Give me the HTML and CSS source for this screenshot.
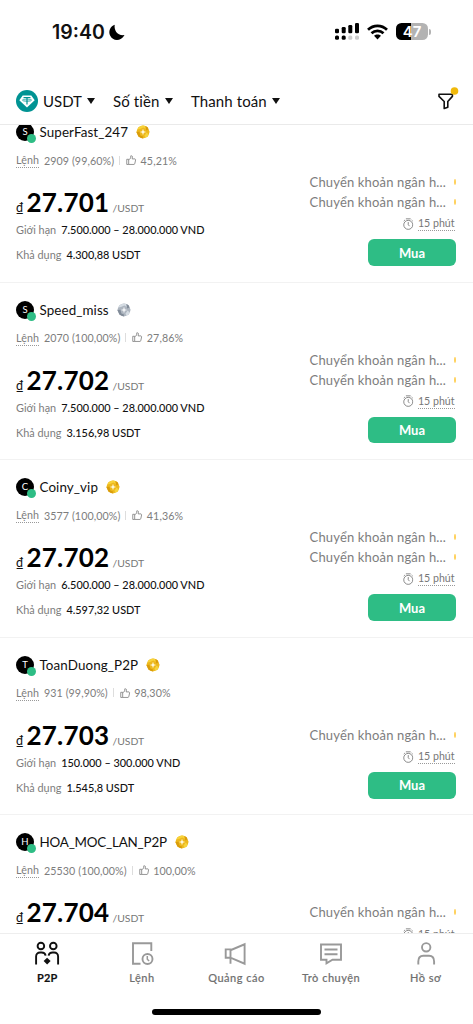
FILE: index.html
```html
<!DOCTYPE html>
<html lang="vi">
<head>
<meta charset="utf-8">
<meta name="viewport" content="width=device-width, initial-scale=1">
<title>P2P</title>
<link rel="stylesheet" href="styles.css">
</head>
<body>
<svg class="defs" width="0" height="0" aria-hidden="true">
  <defs>
    <symbol id="thumb" viewBox="0 0 11 11"><path d="M.8 4.500h2v5.400h-2zM2.800 5 5 3.300V.9c1.300-.3 2 .4 1.800 1.600l-.3 1.600h3l.6.8-.9 4.300-.7.7H2.800" fill="none" stroke="currentColor" stroke-width=".85" stroke-linejoin="round"/></symbol>
    <symbol id="timer" viewBox="0 0 11 12"><g fill="none" stroke="currentColor" stroke-width=".9"><circle cx="5.500" cy="6.900" r="4.700"/><path d="M3 .6h5M5.500 4v2.800l1.400 1.500M9 1.800l1.200 1.200M2 1.800.8 3"/></g></symbol>
    <symbol id="gold" viewBox="0 0 14 14"><path d="M4.800.9 7 .4l2.400.6 2.200 1.200 1 2.200 1 2.400-.8 2.600-1.300 2.300-2.400 1L7 13.600l-2.400-.8-2.200-1.300-1-2.200L.4 7l.8-2.600 1.300-2.200z" fill="#edb81d"/><path d="M4.800.9 7 .4l2.400.6.4 3-2.400-1.500L3.900 4l-2.700.5 1.300-2.300z" fill="#f8d33a"/><path d="m9.400 1 2.200 1.200 1 2.200-2.400 1.100zM.4 7l3-.2 1 3.600 2.600 1-.2 2.100-2.200-.7-2.200-1.300-1-2.200z" fill="#d99c0b"/><path d="m10.600 7.500 2.200 1.900-1.300 2.300-2.400 1-.5-2.200z" fill="#f6d43c"/><path d="m7 3.800.8 2.400 2.400.8-2.400.8L7 10.200l-.8-2.400L3.800 7l2.400-.8z" fill="#fffbe5"/></symbol>
    <symbol id="silver" viewBox="0 0 14 14"><path d="M4.800.9 7 .4l2.400.6 2.200 1.200 1 2.200 1 2.400-.8 2.600-1.300 2.300-2.400 1L7 13.600l-2.400-.8-2.200-1.300-1-2.200L.4 7l.8-2.600 1.300-2.200z" fill="#adb5bf"/><path d="M4.800.9 7 .4 9.400 1l.4 3-2.400-1.500L3.900 4l-2.700.5 1.300-2.300z" fill="#d5dce3"/><path d="m9.400 1 2.200 1.200 1 2.200-2.400 1.100zM.4 7l3-.2 1 3.600 2.600 1-.2 2.100-2.200-.7-2.200-1.300-1-2.200z" fill="#818b98"/><path d="m10.600 7.500 2.200 1.900-1.300 2.300-2.400 1-.5-2.200z" fill="#d5dce3"/><path d="m7 3.800.8 2.400 2.400.8-2.400.8L7 10.200l-.8-2.400L3.800 7l2.400-.8z" fill="#f4f6f8"/></symbol>
  </defs>
</svg>
<div class="app">
  <div class="status">
    <span class="clock">19:40</span>
    <svg class="moon" width="16" height="17" viewBox="0 0 16 17"><path d="M5.700.7C4.900 6.200 8.300 12 15.500 11.100 12 17.700 3.800 17.500 1.100 11.600-.8 7.200 1.100 2.500 5.700.700z"/></svg>
    <svg class="signal" width="25" height="18" viewBox="0 0 25 18"><rect x="0" y="5.700" width="4" height="4.600" rx="1.300"/><rect x="6.700" y="4" width="4" height="6.300" rx="1.300"/><rect x="13.300" y="2" width="4" height="8.300" rx="1.300"/><rect x="20" y="0" width="4" height="10.300" rx="1.300"/><rect x="0" y="12.500" width="4" height="4.200" rx="1.500"/><rect x="6.700" y="12.500" width="4" height="4.200" rx="1.500"/><g fill="#ccc"><rect x="13.300" y="12.500" width="4" height="4.200" rx="1.500"/><rect x="20" y="12.500" width="4" height="4.200" rx="1.500"/></g></svg>
    <svg class="wifi" width="21" height="16" viewBox="0 0 21 16"><g fill="none" stroke="#000" stroke-width="2.700"><path d="M1 5.700c5.300-5.200 13.700-5.200 19 0"/><path d="M4.500 9.200c3.400-3.200 8.600-3.200 12 0"/></g><path d="M7 11.800c2-1.900 5-1.900 7 0l-3.500 3.600z"/></svg>
    <span class="battery"><span>47</span></span><i class="nub"></i>
  </div>

  <header class="filters">
    <svg class="tether" width="22" height="22" viewBox="0 0 22 22"><circle cx="11" cy="11" r="11" fill="#009393"/><path d="M6.700 5.400h8.600l3.400 4.800L11 17.500l-7.700-7.300z" fill="#fff"/><g fill="none" stroke="#009393" stroke-width="1.200"><path d="M7.500 7.500h7M11 7.500v7"/><ellipse cx="11" cy="10.100" rx="4.500" ry="1.100" stroke-width=".8"/></g></svg>
    <span class="f f1">USDT</span><i class="caret"></i>
    <span class="f f2">Số tiền</span><i class="caret"></i>
    <span class="f f3">Thanh toán</span><i class="caret"></i>
    <svg class="funnel" width="22" height="23" viewBox="0 0 22 23"><path d="M2 7.200h13.400v2.200L10.800 14.500v5.700l-3.600 1.300v-7L2 9.400z" fill="none" stroke="#111" stroke-width="1.600" stroke-linejoin="round"/><circle cx="17.500" cy="4" r="3.800" fill="#f0b90b"/></svg>
  </header>

  <main class="list">
    <article class="card">
      <div class="left">
        <div class="who"><span class="avatar">S<i></i></span><b class="name">SuperFast_247</b><svg class="medal"><use href="#gold"/></svg></div>
        <div class="stats"><span class="orders">Lệnh</span><span class="count">2909 (99,60%)</span><i class="bar"></i><svg class="thumb"><use href="#thumb"/></svg><span>45,21%</span></div>
        <div class="price"><span class="dong">₫</span><strong>27.701</strong><span class="unit">/USDT</span></div>
        <div class="info"><span>Giới hạn</span><b>7.500.000 – 28.000.000 VND</b></div>
        <div class="info avail"><span>Khả dụng</span><b>4.300,88 USDT</b></div>
      </div>
      <div class="right">
        <div class="method">Chuyển khoản ngân h...<i></i></div>
        <div class="method">Chuyển khoản ngân h...<i></i></div>
        <div class="time"><svg><use href="#timer"/></svg><span>15 phút</span></div>
        <button class="buy">Mua</button>
      </div>
    </article>
    <article class="card">
      <div class="left">
        <div class="who"><span class="avatar">S<i></i></span><b class="name">Speed_miss</b><svg class="medal"><use href="#silver"/></svg></div>
        <div class="stats"><span class="orders">Lệnh</span><span class="count">2070 (100,00%)</span><i class="bar"></i><svg class="thumb"><use href="#thumb"/></svg><span>27,86%</span></div>
        <div class="price"><span class="dong">₫</span><strong>27.702</strong><span class="unit">/USDT</span></div>
        <div class="info"><span>Giới hạn</span><b>7.500.000 – 28.000.000 VND</b></div>
        <div class="info avail"><span>Khả dụng</span><b>3.156,98 USDT</b></div>
      </div>
      <div class="right">
        <div class="method">Chuyển khoản ngân h...<i></i></div>
        <div class="method">Chuyển khoản ngân h...<i></i></div>
        <div class="time"><svg><use href="#timer"/></svg><span>15 phút</span></div>
        <button class="buy">Mua</button>
      </div>
    </article>
    <article class="card">
      <div class="left">
        <div class="who"><span class="avatar">C<i></i></span><b class="name">Coiny_vip</b><svg class="medal"><use href="#gold"/></svg></div>
        <div class="stats"><span class="orders">Lệnh</span><span class="count">3577 (100,00%)</span><i class="bar"></i><svg class="thumb"><use href="#thumb"/></svg><span>41,36%</span></div>
        <div class="price"><span class="dong">₫</span><strong>27.702</strong><span class="unit">/USDT</span></div>
        <div class="info"><span>Giới hạn</span><b>6.500.000 – 28.000.000 VND</b></div>
        <div class="info avail"><span>Khả dụng</span><b>4.597,32 USDT</b></div>
      </div>
      <div class="right">
        <div class="method">Chuyển khoản ngân h...<i></i></div>
        <div class="method">Chuyển khoản ngân h...<i></i></div>
        <div class="time"><svg><use href="#timer"/></svg><span>15 phút</span></div>
        <button class="buy">Mua</button>
      </div>
    </article>
    <article class="card">
      <div class="left">
        <div class="who"><span class="avatar">T<i></i></span><b class="name">ToanDuong_P2P</b><svg class="medal"><use href="#gold"/></svg></div>
        <div class="stats"><span class="orders">Lệnh</span><span class="count">931 (99,90%)</span><i class="bar"></i><svg class="thumb"><use href="#thumb"/></svg><span>98,30%</span></div>
        <div class="price"><span class="dong">₫</span><strong>27.703</strong><span class="unit">/USDT</span></div>
        <div class="info"><span>Giới hạn</span><b>150.000 – 300.000 VND</b></div>
        <div class="info avail"><span>Khả dụng</span><b>1.545,8 USDT</b></div>
      </div>
      <div class="right">
        <div class="method">Chuyển khoản ngân h...<i></i></div>
        <div class="time"><svg><use href="#timer"/></svg><span>15 phút</span></div>
        <button class="buy">Mua</button>
      </div>
    </article>
    <article class="card last">
      <div class="left">
        <div class="who"><span class="avatar">H<i></i></span><b class="name caps">HOA_MOC_LAN_P2P</b><svg class="medal"><use href="#gold"/></svg></div>
        <div class="stats"><span class="orders">Lệnh</span><span class="count">25530 (100,00%)</span><i class="bar"></i><svg class="thumb"><use href="#thumb"/></svg><span>100,00%</span></div>
        <div class="price"><span class="dong">₫</span><strong>27.704</strong><span class="unit">/USDT</span></div>
      </div>
      <div class="right">
        <div class="method">Chuyển khoản ngân h...<i></i></div>
        <div class="time"><svg><use href="#timer"/></svg><span>15 phút</span></div>
      </div>
    </article>
  </main>

  <nav class="tabs">
    <a class="tab active"><svg viewBox="0 0 26 26"><g fill="none" stroke="currentColor" stroke-width="1.900"><circle cx="6.900" cy="5" r="3.300"/><circle cx="19.300" cy="5" r="3.300"/><path d="M2.100 23.500v-8c0-2.500 1.500-4 4-4h1.500c2.200 0 3.700 1.200 4 3.200M24.100 23.500v-8c0-2.500-1.500-4-4-4h-1.500c-2.200 0-3.700 1.200-4 3.200"/></g><path d="m13.100 16.700 3.500 3.400-3.500 3.500-3.500-3.500z" fill="currentColor"/></svg><span>P2P</span></a>
    <a class="tab"><svg viewBox="0 0 26 26"><g fill="none" stroke="currentColor" stroke-width="1.900"><path d="M22.300 10V2.200H4v20.600h7.500"/><circle cx="18.500" cy="18" r="5"/><path d="M18.300 15v3.200l1.800 1.800" stroke-width="1.500"/></g></svg><span>Lệnh</span></a>
    <a class="tab"><svg viewBox="0 0 26 26"><g fill="none" stroke="currentColor" stroke-width="1.900"><path d="M7.500 8.400H2.700v8.300h4.800l14.100 6V3.300L7.500 9.200zM7.500 8.400v14.400"/></g></svg><span>Quảng cáo</span></a>
    <a class="tab"><svg viewBox="0 0 26 26"><g fill="none" stroke="currentColor" stroke-width="1.900"><path d="M3 3.500h20v15.300h-8.500l-6 3.500v-3.500H3z"/><path d="M6.500 8.500h13M6.500 13.300h13"/></g></svg><span>Trò chuyện</span></a>
    <a class="tab"><svg viewBox="0 0 26 26"><g fill="none" stroke="currentColor" stroke-width="1.900"><circle cx="13.200" cy="6.300" r="4.200"/><path d="M5.300 23.500v-3c0-3.600 1.700-5.700 5-5.700h5.800c3.300 0 5 2.100 5 5.700v3"/></g></svg><span>Hồ sơ</span></a>
  </nav>
  <div class="home"><i></i></div>
</div>
</body>
</html>
```
FILE: styles.css
```css
* { box-sizing: border-box; }
body { margin: 0; background: #fff; color: #111; font-family: Lato, "Open Sans", sans-serif; }
svg { display: block; flex: none; overflow: visible; }
.defs { position: absolute; }
.app { width: 473px; height: 1024px; overflow: hidden; display: flex; flex-direction: column; }
.status { height: 79px; display: flex; align-items: flex-start; padding: 23px 0 0 52px; flex: none; }
.clock { font: 600 19.500px/19px Inter, sans-serif; width: 53px; letter-spacing: 0; white-space: nowrap; }
.moon { margin: 1px 0 0 4px; }
.signal { margin-left: 210px; }
.wifi { margin: 1px 0 0 7px; }
.battery { width: 32px; height: 17px; margin-left: 8px; border-radius: 5.500px; background: linear-gradient(90deg, #000 48%, #b3b3b3 48%); color: #fff; font: 600 15px/17px Inter, sans-serif; text-align: center; }
.nub { width: 2px; height: 6px; margin: 6px 0 0 1px; border-radius: 0 2px 2px 0; background: #b3b3b3; }
.filters { height: 46px; flex: none; border-bottom: 1px solid #eaeaea; display: flex; align-items: center; padding: 0 14px 2px 16px; font-size: 15px; }
.f { white-space: nowrap; }
.f1 { width: 44px; margin-left: 5px; }
.f2 { width: 52px; margin-left: 18px; letter-spacing: .1px; }
.f3 { width: 81px; margin-left: 18px; letter-spacing: .1px; }
.caret { border: 4.500px solid transparent; border-top: 6px solid #111; border-bottom: 0; }
.filters .funnel { margin-left: auto; margin-top: -4px; }
.list { height: 808px; flex: none; overflow: hidden; }
.card { height: 177.600px; display: flex; justify-content: space-between; padding: 17px 17px 15.800px 16px; border-bottom: 1px solid #f2f2f2; }
.card:first-child { margin-top: -20px; }
.card.last { padding-bottom: 42.300px; }
.who { display: flex; align-items: center; height: 20px; }
.avatar { position: relative; width: 18px; height: 18px; border-radius: 50%; background: #000; color: #fff; font-size: 9.500px; line-height: 18px; text-align: center; }
.avatar i { position: absolute; right: -2px; bottom: -2px; width: 9px; height: 9px; border-radius: 50%; background: #2ebd85; }
.name { font-weight: 400; font-size: 13.400px; margin-left: 5.500px; letter-spacing: .1px; white-space: nowrap; }
.name.caps { letter-spacing: -.2px; }
.medal { width: 14px; height: 14px; margin-left: 8px; }
.stats { display: flex; align-items: center; height: 20px; margin-top: 8px; font-size: 10.700px; letter-spacing: .08px; color: #7d7d7d; white-space: nowrap; }
.orders { border-bottom: 1px dotted #999; line-height: 15px; margin-right: 5px; }
.bar { width: 1px; height: 9px; background: #ddd; margin: 0 6px 0 5px; }
.thumb { width: 10.500px; height: 10.500px; margin-right: 4px; }
.price { display: flex; align-items: baseline; height: 34px; line-height: 34px; margin-top: 15px; white-space: nowrap; }
.dong { font-size: 12.500px; width: 10.500px; }
.price strong { font-size: 26px; color: #000; width: 83px; letter-spacing: .2px; }
.unit { font-size: 10.400px; color: #777; margin-left: 3px; }
.info { display: flex; align-items: center; height: 18px; font-size: 10.900px; color: #7d7d7d; margin-top: 1.500px; white-space: nowrap; }
.info b { font-weight: 500; color: #111; margin-left: 5px; letter-spacing: 0; }
.info.avail { margin-top: 7.200px; }
.right { display: flex; flex-direction: column; align-items: flex-end; justify-content: flex-end; }
.method { display: flex; align-items: center; height: 19.700px; font-size: 13px; letter-spacing: .16px; color: #7d7d7d; white-space: nowrap; }
.method i { width: 2.500px; height: 6px; background: #ffd15c; border-radius: 50%; margin-left: 7.500px; }
.time { display: flex; align-items: center; height: 22px; font-size: 10.600px; color: #777; margin: 1px 1.500px 4.500px 0; }
.time svg { width: 10.500px; height: 12px; margin-right: 4px; }
.time span { line-height: 14px; border-bottom: 1px dotted #999; }
.buy { flex: none; width: 88px; height: 26.500px; border: 0; border-radius: 6px; background: #2ebd85; color: #fff; font: 700 13px Lato, sans-serif; padding: 0; }
.tabs { height: 67px; flex: none; border-top: 1px solid #eee; display: grid; grid-template-columns: repeat(5, 1fr); padding-top: 7px; }
.tab { display: flex; flex-direction: column; align-items: center; color: #999; font-size: 11px; font-weight: 500; }
.tab svg { width: 26px; height: 26px; }
.tab span { color: #707070; line-height: 14px; margin-top: 4px; letter-spacing: .5px; -webkit-text-stroke: .15px currentColor; }
.tab.active, .tab.active span { color: #111; }
.tab.active span { font-weight: 700; letter-spacing: .2px; }
.home { display: flex; justify-content: center; padding-top: 9px; }
.home i { width: 169px; height: 5.500px; border-radius: 3px; background: #000; }
```
